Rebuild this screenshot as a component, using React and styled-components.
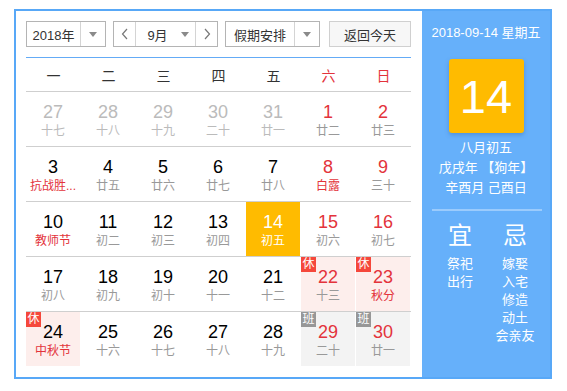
import React from 'react';
import styled, { createGlobalStyle, css } from 'styled-components';

const GlobalStyle = createGlobalStyle`
  body {
    margin: 0;
    background: #fff;
    font-family: "Liberation Sans", "Noto Sans CJK SC", sans-serif;
  }
`;

const Page = styled.div`
  padding: 9px 0 0 14px;
`;

const Frame = styled.div`
  display: flex;
  width: 534px;
  height: 366px;
  border: 2px solid #58a8f7;
`;

const Main = styled.section`
  width: 385px;
  padding: 10px 11px 0 10px;
`;

const Toolbar = styled.div`
  display: flex;
  height: 26px;
  padding-bottom: 10px;
  border-bottom: 1px solid #64abf6;
`;

const Select = styled.div`
  display: flex;
  width: ${p => p.w}px;
  height: 26px;
  box-sizing: border-box;
  border: 1px solid #b4b4b4;
  background: #fff;
  margin-right: ${p => p.mr || 0}px;
  font-size: 13px;
  color: #333;
`;

const SelectText = styled.div`
  flex: 1;
  display: flex;
  align-items: center;
  justify-content: center;
`;

const Caret = styled.div`
  width: ${p => p.w || 24}px;
  display: flex;
  align-items: center;
  justify-content: center;
  border-left: ${p => (p.plain ? 'none' : '1px solid #d4d4d4')};
  &::after {
    content: '';
    border-left: 4px solid transparent;
    border-right: 4px solid transparent;
    border-top: 5px solid #8a8a8a;
  }
`;

const Nav = styled.div`
  width: 21px;
  display: flex;
  align-items: center;
  justify-content: center;
  ${p => (p.side === 'left'
    ? css`border-right: 1px solid #d4d4d4;`
    : css`border-left: 1px solid #d4d4d4;`)}
`;

const TodayButton = styled.div`
  width: 82px;
  height: 26px;
  box-sizing: border-box;
  border: 1px solid #d0d0d0;
  background: #f7f7f7;
  font-size: 13px;
  color: #333;
  display: flex;
  align-items: center;
  justify-content: center;
`;

const WeekHead = styled.div`
  display: grid;
  grid-template-columns: repeat(7, 55px);
  height: 33px;
  border-bottom: 1px solid #cfcfcf;
`;

const WeekDay = styled.div`
  display: flex;
  align-items: center;
  justify-content: center;
  font-size: 14px;
  color: ${p => (p.weekend ? '#e3333b' : '#333')};
`;

const Row = styled.div`
  display: grid;
  grid-template-columns: repeat(7, 55px);
  border-bottom: ${p => (p.last ? 'none' : '1px solid #cfcfcf')};
`;

const bgs = {
  rest: '#fdeeec',
  work: '#f3f3f3',
  today: '#ffbb00',
};

const Cell = styled.div`
  position: relative;
  width: 54px;
  height: 54px;
  box-sizing: border-box;
  padding-top: 9px;
  text-align: center;
  background: ${p => bgs[p.kind] || 'transparent'};
`;

const Num = styled.div`
  font-size: 18px;
  line-height: 22px;
  color: ${p => p.color};
`;

const Lunar = styled.div`
  font-size: 12px;
  line-height: 16px;
  color: ${p => p.color};
  white-space: nowrap;
`;

const Badge = styled.span`
  position: absolute;
  left: 0;
  top: 0;
  width: 15px;
  height: 15px;
  line-height: 15px;
  font-size: 12px;
  color: #fff;
  text-align: center;
  background: ${p => (p.work ? '#979797' : '#f5473b')};
`;

const Side = styled.aside`
  width: 128px;
  background: #66b0fa;
  color: #fff;
  display: flex;
  flex-direction: column;
  align-items: center;
`;

const SideDate = styled.div`
  margin-top: 13px;
  font-size: 13px;
  line-height: 18px;
`;

const BigDay = styled.div`
  margin-top: 17px;
  width: 75px;
  height: 74px;
  border-radius: 3px;
  background: #ffbb00;
  box-shadow: 0 2px 4px rgba(40, 90, 160, 0.35);
  font-size: 47px;
  display: flex;
  align-items: center;
  justify-content: center;
`;

const LunarInfo = styled.div`
  margin-top: 5px;
  font-size: 13px;
  line-height: 20px;
  text-align: center;
`;

const Divider = styled.div`
  align-self: stretch;
  margin: 11px 8px 0 10px;
  height: 2px;
  background: rgba(255, 255, 255, 0.35);
`;

const Advice = styled.div`
  display: flex;
  gap: 5px;
  margin-top: 10px;
  padding-left: 3px;
`;

const AdviceCol = styled.div`
  width: 50px;
  text-align: center;
`;

const AdviceTitle = styled.div`
  font-size: 24px;
  line-height: 30px;
  margin-bottom: 4px;
`;

const AdviceItem = styled.div`
  font-size: 13px;
  line-height: 18px;
`;

const Chevron = ({ dir }) => (
  <svg width="8" height="12" viewBox="0 0 8 12">
    <polyline
      points={dir === 'left' ? '6,1 1.5,6 6,11' : '2,1 6.5,6 2,11'}
      fill="none"
      stroke="#777"
      strokeWidth="1.2"
    />
  </svg>
);

const RED = '#e3333b';
const GREY = '#999';
const FADED = '#bbb';

// [day, lunar, flags]  p = prev month, w = weekend, f = festival, s = selected, r = rest, b = work
const weeks = [
  [[27, '十七', 'p'], [28, '十八', 'p'], [29, '十九', 'p'], [30, '二十', 'p'], [31, '廿一', 'p'], [1, '廿二', 'w'], [2, '廿三', 'w']],
  [[3, '抗战胜...', 'f'], [4, '廿五'], [5, '廿六'], [6, '廿七'], [7, '廿八'], [8, '白露', 'wf'], [9, '三十', 'w']],
  [[10, '教师节', 'f'], [11, '初二'], [12, '初三'], [13, '初四'], [14, '初五', 's'], [15, '初六', 'w'], [16, '初七', 'w']],
  [[17, '初八'], [18, '初九'], [19, '初十'], [20, '十一'], [21, '十二'], [22, '十三', 'wr'], [23, '秋分', 'wrf']],
  [[24, '中秋节', 'rf'], [25, '十六'], [26, '十七'], [27, '十八'], [28, '十九'], [29, '二十', 'wb'], [30, '廿一', 'wb']],
];

function Day({ day, lunar, flags = '' }) {
  const has = c => flags.includes(c);
  let numColor = '#000';
  let lunarColor = GREY;
  if (has('p')) { numColor = FADED; lunarColor = FADED; }
  if (has('w')) numColor = RED;
  if (has('f')) lunarColor = RED;
  let kind;
  if (has('r')) kind = 'rest';
  if (has('b')) kind = 'work';
  if (has('s')) { kind = 'today'; numColor = '#fff'; lunarColor = '#fff'; }
  return (
    <Cell kind={kind}>
      {has('r') && <Badge>休</Badge>}
      {has('b') && <Badge work>班</Badge>}
      <Num color={numColor}>{day}</Num>
      <Lunar color={lunarColor}>{lunar}</Lunar>
    </Cell>
  );
}

export default function App() {
  return (
    <Page>
      <GlobalStyle />
      <Frame>
        <Main>
          <Toolbar>
            <Select w={80} mr={7}>
              <SelectText>2018年</SelectText>
              <Caret />
            </Select>
            <Select w={105} mr={7}>
              <Nav side="left"><Chevron dir="left" /></Nav>
              <SelectText style={{ paddingLeft: 4 }}>9月</SelectText>
              <Caret plain w={20} />
              <Nav side="right"><Chevron dir="right" /></Nav>
            </Select>
            <Select w={95} mr={9}>
              <SelectText>假期安排</SelectText>
              <Caret />
            </Select>
            <TodayButton>返回今天</TodayButton>
          </Toolbar>
          <WeekHead>
            {['一', '二', '三', '四', '五', '六', '日'].map((d, i) => (
              <WeekDay key={d} weekend={i > 4}>{d}</WeekDay>
            ))}
          </WeekHead>
          {weeks.map((week, wi) => (
            <Row key={wi} last={wi === weeks.length - 1}>
              {week.map(([day, lunar, flags], di) => (
                <Day key={di} day={day} lunar={lunar} flags={flags} />
              ))}
            </Row>
          ))}
        </Main>
        <Side>
          <SideDate>2018-09-14 星期五</SideDate>
          <BigDay>14</BigDay>
          <LunarInfo>
            <div>八月初五</div>
            <div>戊戌年 【狗年】</div>
            <div>辛酉月 己酉日</div>
          </LunarInfo>
          <Divider />
          <Advice>
            <AdviceCol>
              <AdviceTitle>宜</AdviceTitle>
              <AdviceItem>祭祀</AdviceItem>
              <AdviceItem>出行</AdviceItem>
            </AdviceCol>
            <AdviceCol>
              <AdviceTitle>忌</AdviceTitle>
              <AdviceItem>嫁娶</AdviceItem>
              <AdviceItem>入宅</AdviceItem>
              <AdviceItem>修造</AdviceItem>
              <AdviceItem>动土</AdviceItem>
              <AdviceItem>会亲友</AdviceItem>
            </AdviceCol>
          </Advice>
        </Side>
      </Frame>
    </Page>
  );
}
